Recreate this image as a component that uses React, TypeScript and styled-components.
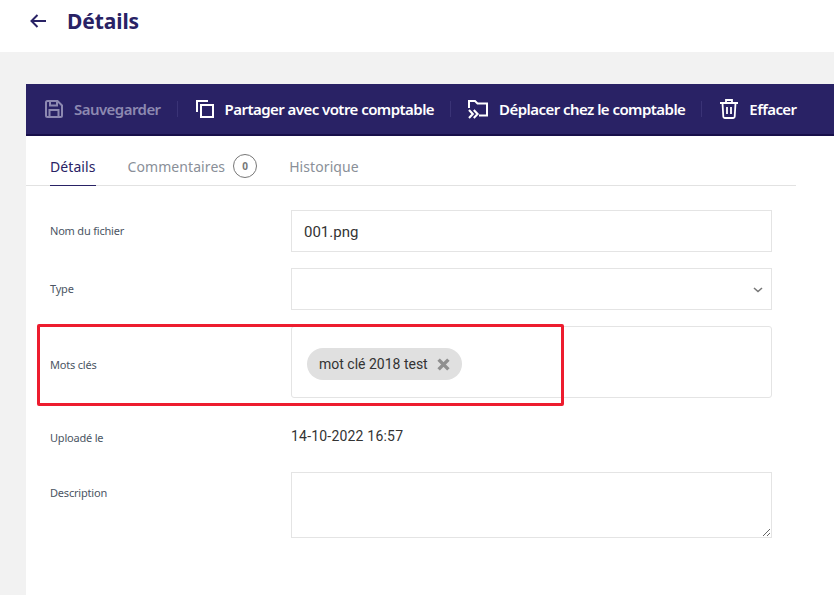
import React from "react"
import styled, { createGlobalStyle } from "styled-components"

const GlobalStyle = createGlobalStyle`
  html, body {
    margin: 0;
    padding: 0;
    background: #f2f2f2;
    overflow: hidden;
    font-family: "Noto Sans", "Open Sans", sans-serif;
  }
  * { box-sizing: border-box; }
`

const navy = "#292265"

function BackIcon() {
  return (
    <svg width="18" height="16" viewBox="0 0 18 16" fill="none" stroke={navy} strokeWidth="2">
      <path d="M17 8H2.500M8.500 2 2.500 8l6 6" />
    </svg>
  )
}

function SaveIcon() {
  return (
    <svg width="18" height="18" viewBox="0 0 18 18" fill="none" stroke="#8d89b1" strokeWidth="2">
      <path d="M2.500 1h10l4.500 4.500V15.500a1.500 1.500 0 0 1-1.500 1.500h-13A1.500 1.500 0 0 1 1 15.500v-13A1.500 1.500 0 0 1 2.500 1Z" />
      <path d="M5 1v4.500h7V1M4.500 17v-7h9v7" />
    </svg>
  )
}

function CopyIcon() {
  return (
    <svg width="18" height="18" viewBox="0 0 18 18" fill="none" stroke="#fff" strokeWidth="2">
      <path d="M1 12V1h11" />
      <rect x="5" y="5" width="12" height="12" />
    </svg>
  )
}

function MoveIcon() {
  return (
    <MoveSvg width="20" height="19" viewBox="0 0 20 19" fill="none" stroke="#fff" strokeWidth="2">
      <path d="M1 8V1h6l2.500 2.500H19v12h-8" />
      <path d="M1 10 4.800 14 1 18M5.800 10 9.600 14 5.800 18" strokeWidth="2.100" />
    </MoveSvg>
  )
}

function TrashIcon() {
  return (
    <svg width="18" height="20" viewBox="0 0 18 20" fill="none" stroke="#fff" strokeWidth="1.800">
      <path d="M0 4h18M6 4V1h6v3M2.500 4l.8 13.500A1.600 1.600 0 0 0 5 19h8a1.600 1.600 0 0 0 1.700-1.500L15.500 4M7 8v7M11 8v7" />
    </svg>
  )
}

function App(): JSX.Element {
  return (
    <Page>
      <GlobalStyle />
      <Header>
        <BackIcon />
        <Title>Détails</Title>
      </Header>
      <Card>
        <Toolbar>
          <Action $disabled>
            <SaveIcon />
            <span>Sauvegarder</span>
          </Action>
          <Action>
            <CopyIcon />
            <span>Partager avec votre comptable</span>
          </Action>
          <Action>
            <MoveIcon />
            <span>Déplacer chez le comptable</span>
          </Action>
          <Action $last>
            <TrashIcon />
            <span>Effacer</span>
          </Action>
        </Toolbar>
        <Tabs>
          <Tab $active>Détails</Tab>
          <Tab>
            Commentaires <Count>0</Count>
          </Tab>
          <Tab>Historique</Tab>
        </Tabs>
        <Form>
          <Row>
            <Label>Nom du fichier</Label>
            <Field>001.png</Field>
          </Row>
          <Row>
            <Label>Type</Label>
            <Field>
              <Chevron width="10" height="6" viewBox="0 0 10 6" fill="none" stroke="#777" strokeWidth="1.600">
                <path d="M1 1l4 3.500L9 1" />
              </Chevron>
            </Field>
          </Row>
          <Row>
            <TagsLabel>Mots clés</TagsLabel>
            <TagsField>
              <Tag>
                mot clé 2018 test
                <svg viewBox="0 0 12 12" width="13" height="13" stroke="#8f8f8f" strokeWidth="3.200">
                  <path d="M1.500 1.500l9 9M10.500 1.500l-9 9" />
                </svg>
              </Tag>
            </TagsField>
            <Highlight />
          </Row>
          <Row>
            <UploadLabel>Uploadé le</UploadLabel>
            <DateValue>14-10-2022 16:57</DateValue>
          </Row>
          <Row>
            <DescriptionLabel>Description</DescriptionLabel>
            <Description readOnly />
          </Row>
        </Form>
      </Card>
    </Page>
  )
}

const Page = styled.div`
  width: 834px;
  height: 595px;
  overflow: hidden;
  background: #f2f2f2;
`

const Header = styled.header`
  height: 52px;
  background: #fff;
  display: flex;
  align-items: center;
  padding: 0 0 10px 29px;
  gap: 20px;
`

const Title = styled.h1`
  margin: 0;
  font-size: 21px;
  font-weight: 700;
  letter-spacing: -0.1px;
  color: ${navy};
`

const Card = styled.main`
  margin: 32px 0 0 26px;
  height: 511px;
  background: #fff;
`

const Toolbar = styled.div`
  height: 52px;
  background: ${navy};
  border-bottom: 2px solid #170f4a;
  display: flex;
  align-items: center;
  padding-left: 19px;
`

const Action = styled.div<{ $disabled?: boolean; $last?: boolean }>`
  display: flex;
  align-items: center;
  gap: 11px;
  height: 16px;
  padding-right: 16px;
  margin-right: 18px;
  border-right: ${(p) => (p.$last ? "none" : "1px solid #3a3376")};
  font-size: 15px;
  font-weight: 600;
  letter-spacing: -0.55px;
  white-space: nowrap;
  color: ${(p) => (p.$disabled ? "#8d89b1" : "#fff")};
`

const MoveSvg = styled.svg`
  margin-left: -1px;
`

const Tabs = styled.div`
  width: 770px;
  height: 50px;
  padding-left: 24px;
  border-bottom: 1px solid #e2e2e2;
  display: flex;
  gap: 32px;
  align-items: stretch;
`

const Tab = styled.div<{ $active?: boolean }>`
  display: flex;
  align-items: center;
  gap: 8px;
  padding-top: 11px;
  height: 50px;
  font-size: 14px;
  letter-spacing: 0.08px;
  color: ${(p) => (p.$active ? navy : "#8a8f98")};
  border-bottom: ${(p) => (p.$active ? `1px solid ${navy}` : "none")};
`

const Count = styled.span`
  width: 24px;
  height: 24px;
  margin-top: -2px;
  border: 1px solid #777;
  border-radius: 50%;
  display: flex;
  align-items: center;
  justify-content: center;
  font-size: 10px;
  font-weight: 700;
  color: #777;
`

const Form = styled.div`
  padding: 24px 0 0 24px;
  display: flex;
  flex-direction: column;
  gap: 16px;
  width: 746px;
`

const Row = styled.div`
  position: relative;
  display: grid;
  grid-template-columns: 241px 481px;
  align-items: center;
`

const Label = styled.label`
  padding-bottom: 2px;
  font-size: 11px;
  letter-spacing: -0.2px;
  color: #4b5563;
`

const TagsLabel = styled(Label)`
  padding: 5px 0 0;
`

const UploadLabel = styled(Label)`
  padding: 4px 0 0;
`

const DescriptionLabel = styled(Label)`
  align-self: start;
  padding: 13px 0 0;
`

const Field = styled.div`
  position: relative;
  height: 42px;
  border: 1px solid #e4e4e4;
  padding: 1px 0 0 12px;
  display: flex;
  align-items: center;
  font-family: Roboto, sans-serif;
  font-size: 15px;
  color: #333;
`

const Chevron = styled.svg`
  position: absolute;
  right: 8px;
  top: 18px;
`

const TagsField = styled.div`
  height: 72px;
  border: 1px solid #e4e4e4;
  border-radius: 3px;
  padding: 21px 15px 0;
`

const Tag = styled.span`
  display: inline-flex;
  align-items: center;
  gap: 9px;
  height: 32px;
  padding: 0 12px;
  border-radius: 16px;
  background: #e0e0e0;
  font-family: Roboto, sans-serif;
  font-size: 14px;
  color: #333;
`

const Highlight = styled.div`
  position: absolute;
  left: -13px;
  top: -2px;
  width: 527px;
  height: 82px;
  border: 3px solid #ed1c2e;
  border-radius: 2px;
`

const DateValue = styled.div`
  height: 42px;
  padding-top: 2px;
  display: flex;
  align-items: center;
  font-family: Roboto, sans-serif;
  font-size: 14px;
  letter-spacing: 0.2px;
  color: #333;
`

const Description = styled.textarea`
  height: 66px;
  width: 481px;
  border: 1px solid #e4e4e4;
  border-radius: 0;
  outline: none;
  margin: 0;
  display: block;
`

export default App
